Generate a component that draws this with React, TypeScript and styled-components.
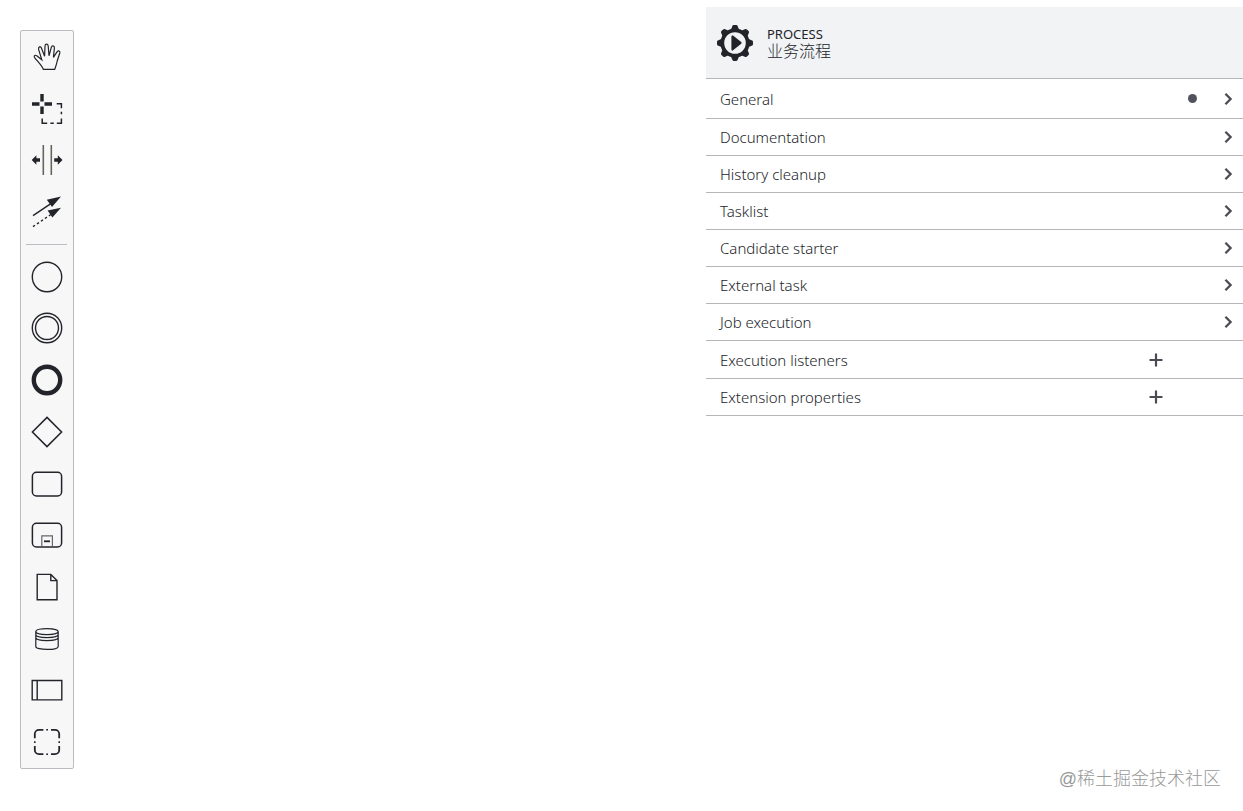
import React from "react";
import styled, { createGlobalStyle } from "styled-components";

const ink = "#22242a";

const GlobalStyle = createGlobalStyle`
  * { box-sizing: border-box; }
  body {
    margin: 0;
    background: #fff;
    color: ${ink};
    font-family: "Noto Sans", "Noto Sans CJK SC", sans-serif;
  }
  button { font: inherit; color: inherit; cursor: pointer; }
`;

const Modeler = styled.div`
  position: relative;
  display: flex;
  justify-content: space-between;
  min-height: 100vh;
`;

const Canvas = styled.main`
  flex: 1;
  display: flex;
  padding: 30px 20px 42px;
`;

const Palette = styled.nav`
  display: flex;
  flex-direction: column;
  width: 54px;
  background: #f7f7f8;
  border: 1px solid #b9bcc1;
  border-radius: 2px;
`;

const Tool = styled.button`
  flex: 1;
  display: flex;
  align-items: center;
  justify-content: center;
  min-height: 40px;
  padding: 0;
  border: 0;
  background: none;
`;

const Separator = styled.hr`
  width: 41px;
  margin: 6px 5px;
  border: 0;
  border-top: 1px solid #b9bcc1;
`;

const Glyph = styled.svg`
  display: block;
  flex: none;
  fill: none;
  stroke: ${ink};
  stroke-width: 1.4;
`;

const Panel = styled.aside`
  flex: 0 1 537px;
  padding-top: 7px;
`;

const PanelHeader = styled.header`
  display: flex;
  align-items: center;
  gap: 12px;
  height: 72px;
  padding: 0 9px;
  background: #f1f3f5;
  border-bottom: 1px solid #b4b6ba;
`;

const ElementType = styled.div`
  font-size: 13px;
  line-height: 18px;
  text-transform: uppercase;
`;

const ElementName = styled.div`
  font-family: "Liberation Sans", "Noto Sans CJK SC", sans-serif;
  font-size: 16px;
  font-weight: 300;
  line-height: 18px;
`;

const Groups = styled.ul`
  margin: 0;
  padding: 0;
  list-style: none;
`;

const Group = styled.li<{ $height?: number }>`
  display: grid;
  height: ${(p) => p.$height ?? 37}px;
  border-bottom: 1px solid #b4b6ba;
`;

const GroupRow = styled.div`
  display: grid;
  grid-template-columns: 1fr 30px 42px 30px;
  align-items: center;
  justify-items: center;
  width: 100%;
  padding: 0 0 0 14px;
  border: 0;
  background: none;
  text-align: left;
`;

const GroupTitle = styled.span`
  justify-self: start;
  font-size: 15px;
  font-weight: 300;
  line-height: 20px;
`;

const DataDot = styled.span`
  grid-column: 3;
  width: 9px;
  height: 9px;
  border-radius: 50%;
  background: #52525e;
`;

const Chevron = styled(Glyph)`
  grid-column: 4;
  stroke: #4b4b54;
  stroke-width: 2.3;
`;

const AddButton = styled.button`
  grid-column: 2;
  padding: 0;
  border: 0;
  background: none;
`;

const PlusGlyph = styled(Glyph)`
  stroke: #4b4b54;
  stroke-width: 2.2;
`;

const Watermark = styled.div`
  position: absolute;
  right: 22px;
  bottom: 19px;
  color: #999;
  font-family: "Liberation Sans", "Noto Sans CJK SC", sans-serif;
  font-size: 18px;
  font-weight: 300;
  line-height: 26px;
`;

type ToolItem = { label: string; art: React.ReactNode };

const tools: ToolItem[] = [
  {
    label: "Activate hand tool",
    art: (
      <path
        strokeWidth="1.2"
        d="M14.3 30.4C13 26.5 8.5 22.5 5.4 18.3C4.6 16.6 6.4 15.6 7.8 16.8L12.8 20.8L9.6 10.4C9.2 7.8 11.4 6.8 12.3 8.8L15.6 17.2L16 7C16.2 4.6 18.9 4.6 19.2 7L20 16.8L22.3 8.4C23 6 25.6 6.6 25.4 9L24.4 18.4L28.2 12.7C29.4 11 31.3 12 30.8 14L28.2 22C27.7 25 26.7 27.5 25.7 30.4Z"
      />
    ),
  },
  {
    label: "Activate lasso tool",
    art: (
      <>
        <path strokeWidth="3.4" d="M13 3v7.5M13 15.5V23M3 13h7.5M15.5 13H23" />
        <path strokeWidth="1.5" d="M27.7 12.7h4.7v4.6M32.4 20.8v2.4M32.4 27.5V32.2h-4.6M24.8 32.2h-3.4M18.2 32.2H13.2v-4.6" />
      </>
    ),
  },
  {
    label: "Activate create/remove space tool",
    art: (
      <>
        <path stroke="#66665e" strokeWidth="1.6" d="M14.3 3v30M22.3 3v30" />
        <path fill={ink} stroke="none" d="M2.7 18L7.4 13.2v3.1H11v3.4H7.4v3.1zM33.5 18L28.8 13.2v3.1h-3.6v3.4h3.6v3.1z" />
      </>
    ),
  },
  {
    label: "Activate global connect tool",
    art: (
      <>
        <path d="M4 21.6L23 8.8" />
        <path strokeDasharray="2.4 2.4" d="M4 32.6L22 20.4" />
        <path fill={ink} stroke="none" d="M32 2.6L17.8 5.8 23 13zM32 13.8L18.6 16.4 23.4 23.6z" />
      </>
    ),
  },
];

const elements: ToolItem[] = [
  { label: "Create start event", art: <circle cx="18" cy="18" r="14.7" /> },
  {
    label: "Create intermediate event",
    art: (
      <>
        <circle cx="18" cy="18" r="14.7" />
        <circle cx="18" cy="18" r="11.5" />
      </>
    ),
  },
  { label: "Create end event", art: <circle cx="18" cy="18" r="13.2" strokeWidth="4.4" /> },
  { label: "Create gateway", art: <path strokeWidth="1.5" d="M18 3.4L32.6 18 18 32.6 3.4 18z" /> },
  { label: "Create task", art: <rect x="3.4" y="6.3" width="29.2" height="23.6" rx="4" strokeWidth="1.5" /> },
  {
    label: "Create expanded sub-process",
    art: (
      <>
        <rect x="3.4" y="6.3" width="29.2" height="23.6" rx="4" strokeWidth="1.5" />
        <path stroke="#66666a" strokeWidth="1.2" d="M12.8 29.6V18.9h10.6v10.7" />
        <path strokeWidth="1.8" d="M15 24.3h6" />
      </>
    ),
  },
  {
    label: "Create data object",
    art: <path d="M8.2 5.4h13.6l6.2 6.2v19.2H8.2zM21.8 5.4v6.2H28" />,
  },
  {
    label: "Create data store",
    art: (
      <path
        strokeWidth="1.2"
        d="M6.8 10.6c0-4 22.4-4 22.4 0v14.8c0 4-22.4 4-22.4 0zM6.8 10.6c0 4 22.4 4 22.4 0M6.8 13.6c0 4 22.4 4 22.4 0M6.8 16.6c0 4 22.4 4 22.4 0"
      />
    ),
  },
  { label: "Create pool", art: <path d="M3.2 8.5h29.6v19.4H3.2zM8.2 8.5v19.4" /> },
  {
    label: "Create group",
    art: (
      <>
        <path
          strokeWidth="1.8"
          d="M5.8 14.2V10a4.2 4.2 0 0 1 4.2-4.2h4.4M22 5.8h4A4.2 4.2 0 0 1 30.2 10v4.2M30.2 22v4a4.2 4.2 0 0 1-4.2 4.2h-4M14.4 30.2H10A4.2 4.2 0 0 1 5.8 26v-4"
        />
        <path strokeWidth="1.6" d="M17.2 5.8h1.8M17.2 30.2h1.8M5.8 17.2v1.8M30.2 17.2v1.8" />
      </>
    ),
  },
];

const ToolButton = ({ label, art }: ToolItem) => (
  <Tool type="button" aria-label={label}>
    <Glyph width="36" height="36" viewBox="0 0 36 36" aria-hidden="true">
      {art}
    </Glyph>
  </Tool>
);

const ProcessIcon = () => (
  <Glyph width="40" height="40" viewBox="0 0 40 40" aria-hidden="true">
    <circle cx="20" cy="20" r="12.7" strokeWidth="3.8" />
    {[0, 45, 90, 135, 180, 225, 270, 315].map((angle) => (
      <path
        key={angle}
        transform={`rotate(${angle} 20 20)`}
        fill={ink}
        stroke="none"
        d="M15.6 7.4L17.2 3.4Q17.5 2 18.8 2h2.4Q22.5 2 22.8 3.4L24.4 7.4z"
      />
    ))}
    <path fill={ink} strokeWidth="2" strokeLinejoin="round" d="M17.4 13.4L25.6 19.9 17.4 26.6z" />
  </Glyph>
);

type GroupItem = { title: string; height?: number; edited?: boolean; list?: boolean };

const groups: GroupItem[] = [
  { title: "General", height: 40, edited: true },
  { title: "Documentation" },
  { title: "History cleanup" },
  { title: "Tasklist" },
  { title: "Candidate starter" },
  { title: "External task" },
  { title: "Job execution" },
  { title: "Execution listeners", height: 38, list: true },
  { title: "Extension properties", list: true },
];

const PanelGroup = ({ title, height, edited, list }: GroupItem) => (
  <Group $height={height}>
    {list ? (
      <GroupRow>
        <GroupTitle>{title}</GroupTitle>
        <AddButton type="button" aria-label={`Add to ${title}`}>
          <PlusGlyph width="14" height="14" viewBox="0 0 14 14" aria-hidden="true">
            <path d="M7 .5v13M.5 7h13" />
          </PlusGlyph>
        </AddButton>
      </GroupRow>
    ) : (
      <GroupRow as="button" aria-expanded={false}>
        <GroupTitle>{title}</GroupTitle>
        {edited && <DataDot />}
        <Chevron width="12" height="14" viewBox="0 0 12 14" aria-hidden="true">
          <path d="M3.4 1.8L8.6 7 3.4 12.2" />
        </Chevron>
      </GroupRow>
    )}
  </Group>
);

export default function App() {
  return (
    <>
      <GlobalStyle />
      <Modeler>
        <Canvas>
          <Palette aria-label="Palette">
            {tools.map((t) => (
              <ToolButton key={t.label} {...t} />
            ))}
            <Separator />
            {elements.map((t) => (
              <ToolButton key={t.label} {...t} />
            ))}
          </Palette>
        </Canvas>
        <Panel>
          <PanelHeader>
            <ProcessIcon />
            <div>
              <ElementType>Process</ElementType>
              <ElementName>业务流程</ElementName>
            </div>
          </PanelHeader>
          <Groups>
            {groups.map((g) => (
              <PanelGroup key={g.title} {...g} />
            ))}
          </Groups>
        </Panel>
        <Watermark>@稀土掘金技术社区</Watermark>
      </Modeler>
    </>
  );
}
